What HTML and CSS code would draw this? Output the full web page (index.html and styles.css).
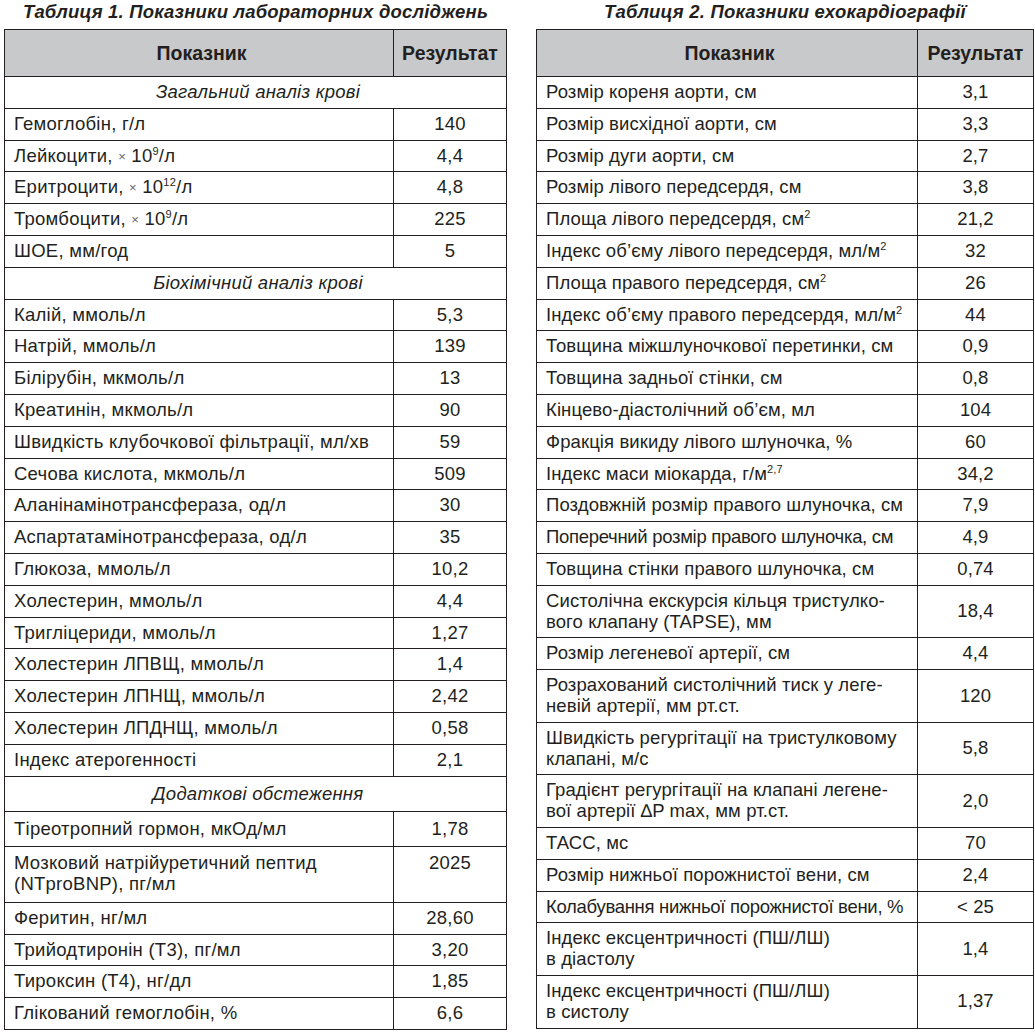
FILE: index.html
```html
<!DOCTYPE html>
<html lang="uk">
<head>
<meta charset="utf-8">
<title>Таблиці</title>
<link rel="stylesheet" href="styles.css">
</head>
<body>
<div class="page">
  <section class="block block-left">
    <h2 class="caption">Таблиця 1. Показники лабораторних досліджень</h2>
    <table class="grid grid-left">
      <colgroup><col class="c1"><col class="c2"></colgroup>
      <thead>
        <tr><th>Показник</th><th>Результат</th></tr>
      </thead>
      <tbody>
        <tr class="sect"><td colspan="2">Загальний аналіз крові</td></tr>
        <tr><td>Гемоглобін, г/л</td><td>140</td></tr>
        <tr><td>Лейкоцити, <span class="times">×</span> 10<sup>9</sup>/л</td><td>4,4</td></tr>
        <tr><td>Еритроцити, <span class="times">×</span> 10<sup>12</sup>/л</td><td>4,8</td></tr>
        <tr><td>Тромбоцити, <span class="times">×</span> 10<sup>9</sup>/л</td><td>225</td></tr>
        <tr><td>ШОЕ, мм/год</td><td>5</td></tr>
        <tr class="sect"><td colspan="2">Біохімічний аналіз крові</td></tr>
        <tr><td>Калій, ммоль/л</td><td>5,3</td></tr>
        <tr><td>Натрій, ммоль/л</td><td>139</td></tr>
        <tr><td>Білірубін, мкмоль/л</td><td>13</td></tr>
        <tr><td>Креатинін, мкмоль/л</td><td>90</td></tr>
        <tr><td>Швидкість клубочкової фільтрації, мл/хв</td><td>59</td></tr>
        <tr><td>Сечова кислота, мкмоль/л</td><td>509</td></tr>
        <tr><td>Аланінамінотрансфераза, од/л</td><td>30</td></tr>
        <tr><td>Аспартатамінотрансфераза, од/л</td><td>35</td></tr>
        <tr><td>Глюкоза, ммоль/л</td><td>10,2</td></tr>
        <tr><td>Холестерин, ммоль/л</td><td>4,4</td></tr>
        <tr><td>Тригліцериди, ммоль/л</td><td>1,27</td></tr>
        <tr><td>Холестерин ЛПВЩ, ммоль/л</td><td>1,4</td></tr>
        <tr><td>Холестерин ЛПНЩ, ммоль/л</td><td>2,42</td></tr>
        <tr><td>Холестерин ЛПДНЩ, ммоль/л</td><td>0,58</td></tr>
        <tr><td>Індекс атерогенності</td><td>2,1</td></tr>
        <tr class="sect tall"><td colspan="2">Додаткові обстеження</td></tr>
        <tr class="tall2"><td>Тіреотропний гормон, мкОд/мл</td><td>1,78</td></tr>
        <tr class="top"><td>Мозковий натрійуретичний пептид (NTproBNP), пг/мл</td><td>2025</td></tr>
        <tr><td>Феритин, нг/мл</td><td>28,60</td></tr>
        <tr><td>Трийодтиронін (Т3), пг/мл</td><td>3,20</td></tr>
        <tr><td>Тироксин (Т4), нг/дл</td><td>1,85</td></tr>
        <tr><td>Глікований гемоглобін, %</td><td>6,6</td></tr>
      </tbody>
    </table>
  </section>
  <section class="block block-right">
    <h2 class="caption">Таблиця 2. Показники ехокардіографії</h2>
    <table class="grid grid-right">
      <colgroup><col class="c1"><col class="c2"></colgroup>
      <thead>
        <tr><th>Показник</th><th>Результат</th></tr>
      </thead>
      <tbody>
        <tr><td>Розмір кореня аорти, см</td><td>3,1</td></tr>
        <tr><td>Розмір висхідної аорти, см</td><td>3,3</td></tr>
        <tr><td>Розмір дуги аорти, см</td><td>2,7</td></tr>
        <tr><td>Розмір лівого передсердя, см</td><td>3,8</td></tr>
        <tr><td>Площа лівого передсердя, см<sup>2</sup></td><td>21,2</td></tr>
        <tr><td>Індекс об’єму лівого передсердя, мл/м<sup>2</sup></td><td>32</td></tr>
        <tr><td>Площа правого передсердя, см<sup>2</sup></td><td>26</td></tr>
        <tr><td>Індекс об’єму правого передсердя, мл/м<sup>2</sup></td><td>44</td></tr>
        <tr><td>Товщина міжшлуночкової перетинки, см</td><td>0,9</td></tr>
        <tr><td>Товщина задньої стінки, см</td><td>0,8</td></tr>
        <tr><td>Кінцево-діастолічний об’єм, мл</td><td>104</td></tr>
        <tr><td>Фракція викиду лівого шлуночка, %</td><td>60</td></tr>
        <tr><td>Індекс маси міокарда, г/м<sup>2,7</sup></td><td>34,2</td></tr>
        <tr><td>Поздовжній розмір правого шлуночка, см</td><td>7,9</td></tr>
        <tr><td class="tight">Поперечний розмір правого шлуночка, см</td><td>4,9</td></tr>
        <tr><td>Товщина стінки правого шлуночка, см</td><td>0,74</td></tr>
        <tr><td>Систолічна екскурсія кільця тристулко-<br>вого клапану (TAPSE), мм</td><td>18,4</td></tr>
        <tr><td>Розмір легеневої артерії, см</td><td>4,4</td></tr>
        <tr><td>Розрахований систолічний тиск у леге-<br>невій артерії, мм рт.ст.</td><td>120</td></tr>
        <tr><td>Швидкість регургітації на тристулковому<br>клапані, м/с</td><td>5,8</td></tr>
        <tr><td>Градієнт регургітації на клапані легене-<br>вої артерії ∆P max, мм рт.ст.</td><td>2,0</td></tr>
        <tr><td>ТАСС, мс</td><td>70</td></tr>
        <tr><td>Розмір нижньої порожнистої вени, см</td><td>2,4</td></tr>
        <tr><td class="narrower">Колабування нижньої порожнистої вени, %</td><td>&lt; 25</td></tr>
        <tr><td>Індекс ексцентричності (ПШ/ЛШ)<br>в діастолу</td><td>1,4</td></tr>
        <tr><td>Індекс ексцентричності (ПШ/ЛШ)<br>в систолу</td><td>1,37</td></tr>
      </tbody>
    </table>
  </section>
</div>
</body>
</html>
```
FILE: styles.css
```css
html, body {
  margin: 0;
  padding: 0;
  background: #ffffff;
}

body {
  font-family: "Liberation Sans", Arial, sans-serif;
  color: #231f20;
}

.page {
  display: flex;
  gap: 29px;
  padding: 2px 0 0 4px;
}

.block-left { width: 503px; }
.block-right { width: 498px; }

.caption {
  margin: 0;
  height: 27px;
  font-size: 18.5px;
  line-height: 20px;
  font-weight: bold;
  font-style: italic;
  text-align: center;
  letter-spacing: 0.2px;
}

.grid {
  width: 100%;
  border-collapse: collapse;
  table-layout: fixed;
  font-size: 18.5px;
}

.grid-left .c1 { width: 389px; }
.grid-left .c2 { width: 113px; }
.grid-right .c1 { width: 381px; }
.grid-right .c2 { width: 116px; }

.grid th,
.grid td {
  border: 1px solid #231f20;
  padding: 5px 4px 5px 9px;
  line-height: 20.8px;
  vertical-align: middle;
  white-space: nowrap;
}

.grid-left td { letter-spacing: 0.25px; }
.grid-right td { letter-spacing: 0.1px; }

.grid .top td { white-space: normal; }

.grid th {
  background: #c8c9cb;
  font-weight: bold;
  font-size: 19.5px;
  height: 24px;
  padding-top: 11px;
  padding-bottom: 11px;
  text-align: center;
}

.grid th:nth-child(2) {
  padding-left: 2px;
  padding-right: 2px;
}

.grid td:nth-child(2) {
  text-align: center;
  padding-left: 4px;
  padding-right: 4px;
}

.grid-right td:first-child { padding-left: 9px; }

.grid .sect td {
  font-style: italic;
  text-align: center;
}

.grid .tall td {
  padding-top: 7px;
  padding-bottom: 7px;
}

.grid .tall2 td {
  padding-top: 7px;
  padding-bottom: 6px;
}

.grid .top td {
  vertical-align: top;
  padding-top: 6px;
  padding-bottom: 7px;
}

.times {
  font-size: 13px;
  line-height: 0;
  color: #666;
  position: relative;
  top: -1px;
}

sup {
  font-size: 11px;
  line-height: 0;
  vertical-align: 0;
  position: relative;
  top: -7px;
}

.grid-right td.tight {
  letter-spacing: -0.3px;
}

.grid-right td.narrower {
  letter-spacing: -0.3px;
}
```
